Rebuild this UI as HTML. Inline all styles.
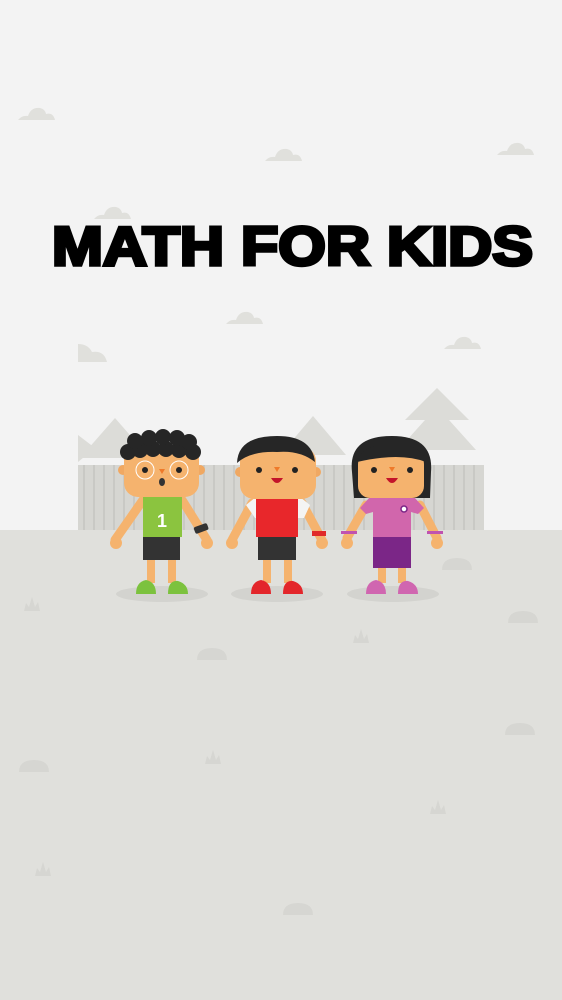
<!DOCTYPE html>
<html><head><meta charset="utf-8"><style>html,body{margin:0;padding:0;background:#f3f3f3}svg{display:block}</style></head>
<body>
<svg width="562" height="1000" viewBox="0 0 562 1000" xmlns="http://www.w3.org/2000/svg">
<rect width="562" height="1000" fill="#f3f3f3"/>
<defs>
<g id="cl"><path d="M-18 4 Q-14 -1 -8 0 Q-5 -9 4 -8 Q9 -7 10 -2 Q17 -4 19 4 Z" fill="#e0e0dc"/></g>
<g id="bump"><path d="M-15 5 Q-15 -7 0 -7 Q15 -7 15 5 Z" fill="#d6d6d2"/></g>
<g id="grass"><path d="M-8 6 L-6 -2 L-3 2 L0 -8 L3 2 L6 -3 L8 6 Z" fill="#d6d6d2"/></g>
</defs>
<use href="#cl" x="36" y="116"/><use href="#cl" x="283" y="157"/><use href="#cl" x="515" y="151"/>
<use href="#cl" x="112" y="215"/><use href="#cl" x="244" y="320"/><use href="#cl" x="462" y="345"/>
<path d="M78 344 Q88 344 92 352 Q104 350 107 362 L78 362 Z" fill="#e0e0dc"/>
<g fill="#dcdcd8">
<path d="M115 418 L80 458 L150 458 Z"/><path d="M78 435 L78 462 L95 448 Z"/>
<path d="M313 416 L280 455 L346 455 Z"/>
<path d="M437 388 L405 420 L425 420 L398 450 L476 450 L449 420 L469 420 Z"/>
</g>
<rect x="78" y="465" width="406" height="66" fill="#d6d6d2"/>
<g stroke="#c9c9c5" stroke-width="2">
<path d="M84 465V531M94 465V531M104 465V531M114 465V531M124 465V531M134 465V531M144 465V531M154 465V531M164 465V531M174 465V531M184 465V531M194 465V531M204 465V531M214 465V531M224 465V531M234 465V531M244 465V531M254 465V531M264 465V531M274 465V531M284 465V531M294 465V531M304 465V531M314 465V531M324 465V531M334 465V531M344 465V531M354 465V531M364 465V531M374 465V531M384 465V531M394 465V531M404 465V531M414 465V531M424 465V531M434 465V531M444 465V531M454 465V531M464 465V531M474 465V531"/>
</g>
<rect x="0" y="530" width="562" height="470" fill="#e0e0dc"/>
<use href="#bump" x="212" y="655"/><use href="#bump" x="523" y="618"/><use href="#bump" x="520" y="730"/>
<use href="#bump" x="34" y="767"/><use href="#bump" x="298" y="910"/><use href="#bump" x="457" y="565"/>
<use href="#grass" x="32" y="605"/><use href="#grass" x="361" y="637"/><use href="#grass" x="213" y="758"/>
<use href="#grass" x="438" y="808"/><use href="#grass" x="43" y="870"/>
<text x="52" y="265" font-family="Liberation Sans, sans-serif" font-weight="bold" font-size="55" textLength="481" lengthAdjust="spacingAndGlyphs" fill="#000" stroke="#000" stroke-width="3.5">MATH FOR KIDS</text>
<ellipse cx="162" cy="594" rx="46" ry="8" fill="#d3d3cf"/>
<ellipse cx="277" cy="594" rx="46" ry="8" fill="#d3d3cf"/>
<ellipse cx="393" cy="594" rx="46" ry="8" fill="#d3d3cf"/>
<!-- kid 1 -->
<g>
<path d="M143 500 L115 540" stroke="#f5b36e" stroke-width="9" stroke-linecap="round"/>
<path d="M182 500 L207 540" stroke="#f5b36e" stroke-width="9" stroke-linecap="round"/>
<circle cx="116" cy="543" r="6" fill="#f5b36e"/><circle cx="207" cy="543" r="6" fill="#f5b36e"/>
<rect x="194" y="525" width="14" height="7" rx="2" fill="#333" transform="rotate(-20 201 528)"/>
<rect x="147" y="555" width="8" height="28" fill="#f5b36e"/><rect x="168" y="555" width="8" height="28" fill="#f5b36e"/>
<path d="M136 594 Q136 582 146 580 Q156 582 156 594 Z" fill="#7cc23e"/>
<path d="M168 594 Q168 580 178 581 Q188 584 188 594 Z" fill="#7cc23e"/>
<rect x="143" y="536" width="37" height="24" fill="#333"/>
<path d="M143 496 L182 496 L182 537 L143 537 Z" fill="#8bc43f"/>
<text x="162" y="527" font-family="Liberation Sans, sans-serif" font-weight="bold" font-size="18" fill="#fff" text-anchor="middle">1</text>
<circle cx="123" cy="470" r="5" fill="#f0a862"/><circle cx="200" cy="470" r="5" fill="#f0a862"/>
<rect x="124" y="445" width="75" height="52" rx="14" fill="#f5b36e"/>
<g fill="#262626">
<circle cx="128" cy="452" r="8"/><circle cx="140" cy="450" r="8"/><circle cx="153" cy="449" r="8"/><circle cx="166" cy="449" r="8"/><circle cx="179" cy="450" r="8"/><circle cx="193" cy="452" r="8"/>
<circle cx="135" cy="441" r="8"/><circle cx="149" cy="438" r="8"/><circle cx="163" cy="437" r="8"/><circle cx="177" cy="438" r="8"/><circle cx="189" cy="442" r="8"/>
</g>
<circle cx="145" cy="470" r="9" fill="none" stroke="#fff" stroke-width="1"/><circle cx="179" cy="470" r="9" fill="none" stroke="#fff" stroke-width="1"/>
<circle cx="145" cy="470" r="3" fill="#222"/><circle cx="179" cy="470" r="3" fill="#222"/>
<path d="M159 469 L165 469 L162 474 Z" fill="#ef7a2a"/>
<ellipse cx="162" cy="482" rx="3" ry="4" fill="#333"/>
</g>
<!-- kid 2 -->
<g>
<path d="M252 503 L232 540" stroke="#f5b36e" stroke-width="9" stroke-linecap="round"/>
<path d="M302 503 L322 540" stroke="#f5b36e" stroke-width="9" stroke-linecap="round"/>
<circle cx="232" cy="543" r="6" fill="#f5b36e"/><circle cx="322" cy="543" r="6" fill="#f5b36e"/>
<rect x="312" y="531" width="14" height="5" fill="#e02a2a"/>
<rect x="263" y="555" width="8" height="28" fill="#f5b36e"/><rect x="284" y="555" width="8" height="28" fill="#f5b36e"/>
<path d="M251 594 Q251 582 261 580 Q271 582 271 594 Z" fill="#e3262b"/>
<path d="M283 594 Q283 580 293 581 Q303 584 303 594 Z" fill="#e3262b"/>
<rect x="258" y="535" width="38" height="25" fill="#333"/>
<path d="M246 505 L256 497 L300 497 L310 505 L304 518 L255 518 Z" fill="#f4f4f4"/>
<path d="M256 496 L298 496 L298 537 L256 537 Z" fill="#e8272b"/>
<circle cx="240" cy="472" r="5" fill="#f0a862"/><circle cx="316" cy="472" r="5" fill="#f0a862"/>
<rect x="240" y="447" width="76" height="52" rx="14" fill="#f5b36e"/>
<path d="M237 463 Q238 436 277 436 Q312 436 315 462 Q300 450 277 452 Q250 451 237 463 Z" fill="#262626"/>
<circle cx="259" cy="470" r="3" fill="#222"/><circle cx="295" cy="470" r="3" fill="#222"/>
<path d="M274 467 L280 467 L277 472 Z" fill="#ef7a2a"/>
<path d="M271 478 Q277 488 283 478 Z" fill="#c3142a"/>
</g>
<!-- kid 3 -->
<g>
<path d="M366 505 L347 538" stroke="#f5b36e" stroke-width="9" stroke-linecap="round"/>
<path d="M420 505 L437 538" stroke="#f5b36e" stroke-width="9" stroke-linecap="round"/>
<circle cx="347" cy="543" r="6" fill="#f5b36e"/><circle cx="437" cy="543" r="6" fill="#f5b36e"/>
<rect x="341" y="531" width="16" height="3" fill="#c052b0"/><rect x="427" y="531" width="16" height="3" fill="#c052b0"/>
<rect x="378" y="560" width="8" height="23" fill="#f5b36e"/><rect x="398" y="560" width="8" height="23" fill="#f5b36e"/>
<path d="M366 594 Q366 582 376 580 Q386 582 386 594 Z" fill="#d066b0"/>
<path d="M398 594 Q398 580 408 581 Q418 584 418 594 Z" fill="#d066b0"/>
<rect x="373" y="535" width="38" height="33" fill="#7b2687"/>
<path d="M360 508 L370 497 L414 497 L424 508 L418 514 L411 512 L411 537 L373 537 L373 512 L366 514 Z" fill="#d166ac"/>
<circle cx="404" cy="509" r="3" fill="#fff" stroke="#7b2687" stroke-width="1.5"/>
<path d="M352 472 Q348 436 392 436 Q434 436 431 472 L430 498 L415 498 L370 498 L354 498 Z" fill="#262626"/>
<rect x="358" y="452" width="66" height="46" rx="12" fill="#f5b36e"/>
<path d="M357 462 Q362 444 392 444 Q422 444 426 462 Q400 452 357 462 Z" fill="#262626"/>
<circle cx="374" cy="470" r="3" fill="#222"/><circle cx="410" cy="470" r="3" fill="#222"/>
<path d="M389 467 L395 467 L392 472 Z" fill="#ef7a2a"/>
<path d="M386 478 Q392 488 398 478 Z" fill="#c3142a"/>
</g>
</svg>
</body></html>
